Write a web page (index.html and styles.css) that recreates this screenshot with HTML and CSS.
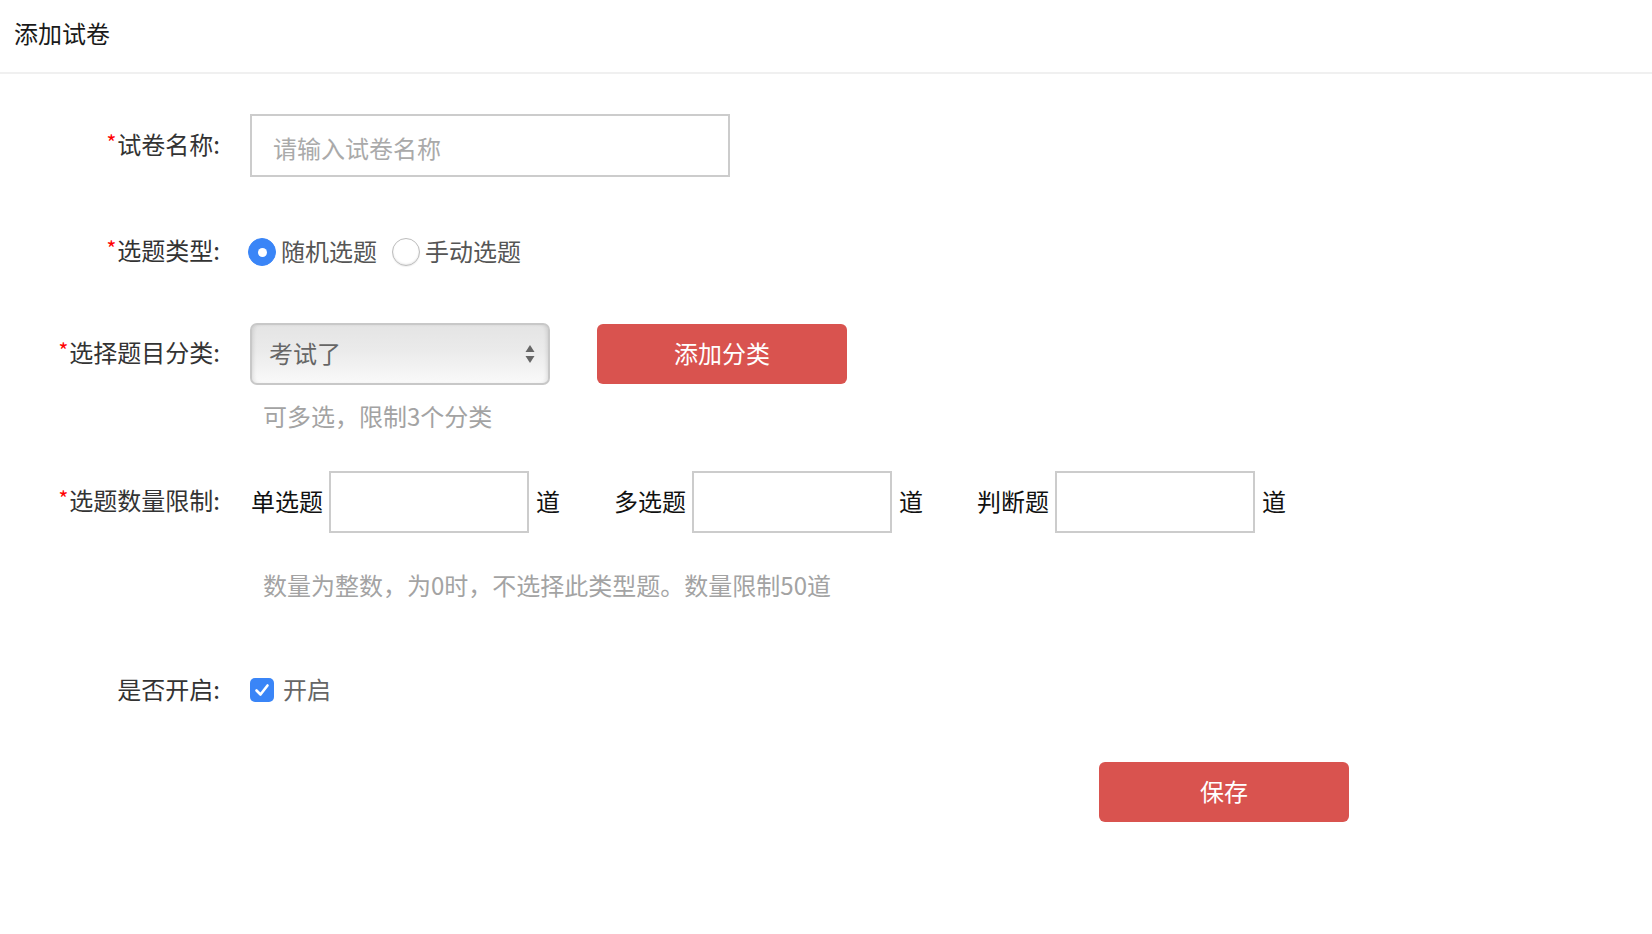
FILE: index.html
```html
<!DOCTYPE html>
<html lang="zh-CN">
<head>
<meta charset="utf-8">
<title>添加试卷</title>
<link rel="stylesheet" href="styles.css">
</head>
<body>
<div class="header"><span class="title">添加试卷</span></div>
<form class="form">
  <div class="row row-name">
    <label class="label"><span class="req">*</span>试卷名称:</label>
    <div class="field">
      <input class="text-input name-input" type="text" placeholder="请输入试卷名称">
    </div>
  </div>

  <div class="row row-type">
    <label class="label"><span class="req">*</span>选题类型:</label>
    <div class="field">
      <span class="radio checked"></span><span class="opt-text">随机选题</span>
      <span class="radio"></span><span class="opt-text">手动选题</span>
    </div>
  </div>

  <div class="row row-cat">
    <label class="label"><span class="req">*</span>选择题目分类:</label>
    <div class="field">
      <div class="select">
        <span class="select-text">考试了</span>
        <svg class="select-arrows" width="10" height="20" viewBox="0 0 10 20">
          <path d="M5 1 L9.5 8 L0.5 8 Z" fill="#666"/>
          <path d="M0.5 12 L9.5 12 L5 19 Z" fill="#666"/>
        </svg>
      </div>
      <button type="button" class="btn btn-add"><span class="btn-text">添加分类</span></button>
    </div>
  </div>
  <div class="hint hint-cat">可多选，限制3个分类</div>

  <div class="row row-count">
    <label class="label"><span class="req">*</span>选题数量限制:</label>
    <div class="field">
      <div class="count-group">
        <span class="count-label">单选题</span>
        <input class="text-input count-input" type="text">
        <span class="count-unit">道</span>
      </div>
      <div class="count-group">
        <span class="count-label">多选题</span>
        <input class="text-input count-input" type="text">
        <span class="count-unit">道</span>
      </div>
      <div class="count-group">
        <span class="count-label">判断题</span>
        <input class="text-input count-input" type="text">
        <span class="count-unit">道</span>
      </div>
    </div>
  </div>
  <div class="hint hint-count">数量为整数，为0时，不选择此类型题。数量限制50道</div>

  <div class="row row-open">
    <label class="label">是否开启:</label>
    <div class="field">
      <span class="checkbox">
        <svg width="24" height="24" viewBox="0 0 24 24">
          <path d="M6.5 12.5 L10.5 16.5 L17.5 7.5" fill="none" stroke="#fff" stroke-width="2.6" stroke-linecap="round" stroke-linejoin="round"/>
        </svg>
      </span>
      <span class="opt-text open-text">开启</span>
    </div>
  </div>

  <div class="row-save">
    <button type="button" class="btn btn-save"><span class="btn-text">保存</span></button>
  </div>
</form>
</body>
</html>
```

FILE: styles.css
```css
* {
  box-sizing: border-box;
}

html, body {
  margin: 0;
  padding: 0;
  background: #fff;
}

body {
  font-family: "Noto Sans CJK SC", "Noto Sans", sans-serif;
  color: #333;
  font-size: 24px;
}

.header {
  height: 74px;
  padding-left: 14px;
  display: flex;
  align-items: center;
  font-size: 24px;
  color: #1a1a1a;
  border-bottom: 2px solid #f0f0f0;
  padding-bottom: 8px;
}

.form {
  margin: 0;
  padding-top: 40px;
}

.row {
  display: flex;
  align-items: center;
}

.label {
  width: 220px;
  flex-shrink: 0;
  text-align: right;
  font-size: 24px;
  line-height: 30px;
  color: #333;
  padding-bottom: 3px;
}

.req {
  color: #f00;
  font-size: 21px;
  position: relative;
  top: -3px;
  margin-right: 1px;
}

.field {
  margin-left: 30px;
  display: flex;
  align-items: center;
}

.text-input {
  border: 2px solid #cccccc;
  background: #fff;
  font-family: inherit;
  font-size: 24px;
  outline: none;
  margin: 0;
}

.name-input {
  width: 480px;
  height: 63px;
  padding: 3px 21px 0;
  color: #333;
}

.name-input::placeholder {
  color: #aaa;
}

/* radio row */
.row-type {
  margin-top: 60px;
  height: 30px;
}

.radio {
  width: 28px;
  height: 28px;
  border-radius: 50%;
  border: 1px solid #bdbdbd;
  background: #fff;
  box-shadow: inset 0 -1px 2px rgba(0,0,0,0.1), 0 1px 1px rgba(0,0,0,0.06);
  display: inline-flex;
  align-items: center;
  justify-content: center;
  flex-shrink: 0;
  margin-left: 15px;
}

.radio:first-child {
  margin-left: -2px;
}

.radio.checked {
  background: #3a85f7;
  border-color: #3a85f7;
  box-shadow: none;
}

.radio.checked::after {
  content: "";
  width: 9px;
  height: 9px;
  border-radius: 50%;
  background: #fff;
}

.opt-text {
  margin-left: 5px;
  color: #555;
  line-height: 30px;
  padding-bottom: 3px;
}

/* category row */
.row-cat {
  margin-top: 56px;
}

.select {
  width: 300px;
  height: 62px;
  border: 2px solid #c8c8c8;
  border-radius: 7px;
  background: linear-gradient(to bottom, #e4e4e4 0%, #ebebeb 45%, #f9f9f9 100%);
  box-shadow: inset 3px 0 4px -2px rgba(0,0,0,0.12), inset -3px 0 4px -2px rgba(0,0,0,0.12), inset 0 -3px 3px -2px rgba(255,255,255,0.9);
  display: flex;
  align-items: center;
  padding: 0 0 3px 17px;
  position: relative;
}

.select-text {
  color: #666;
  font-size: 24px;
}

.select-arrows {
  position: absolute;
  right: 13px;
  top: 19px;
}

.btn {
  border: none;
  border-radius: 6px;
  background: #d9534f;
  color: #fff;
  font-family: inherit;
  font-size: 24px;
  width: 250px;
  height: 60px;
  cursor: pointer;
  padding: 0 0 4px;
}

.btn-add {
  margin-left: 47px;
}

.hint {
  color: #a3a3a3;
  font-size: 24px;
  line-height: 30px;
  padding-left: 263px;
}

.hint-cat {
  margin-top: 16px;
  padding-bottom: 3px;
}

/* count row */
.row-count {
  margin-top: 37px;
}

.count-group {
  display: flex;
  align-items: center;
  margin-right: 53px;
}

.count-label {
  color: #111;
  margin-left: 1px;
  padding-bottom: 3px;
}

.count-input {
  width: 200px;
  height: 62px;
  margin-left: 6px;
  padding: 0 10px;
}

.count-unit {
  color: #111;
  margin-left: 7px;
  padding-bottom: 3px;
}

.hint-count {
  margin-top: 37px;
  padding-bottom: 3px;
}

/* open row */
.row-open {
  margin-top: 72px;
  height: 30px;
}

.checkbox {
  width: 24px;
  height: 24px;
  border-radius: 5px;
  background: #3a85f7;
  display: inline-flex;
  flex-shrink: 0;
}

.open-text {
  color: #666;
  margin-left: 9px;
}

.row-save {
  margin-top: 57px;
  padding-left: 1099px;
}
```
